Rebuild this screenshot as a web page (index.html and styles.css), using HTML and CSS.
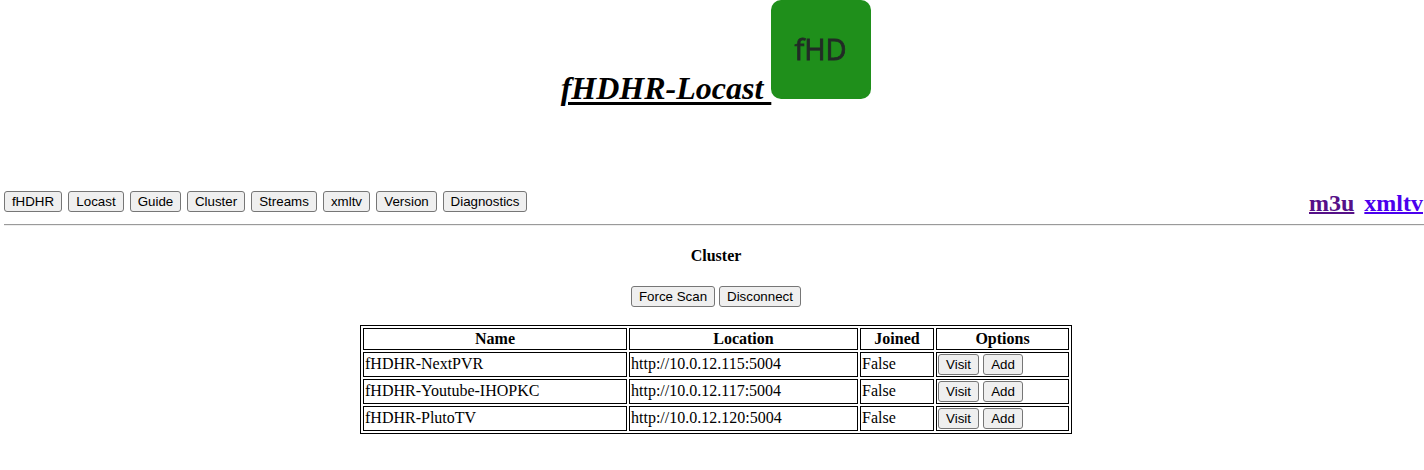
FILE: index.html
```html
<!DOCTYPE html>
<html lang="en">
<head>
<meta charset="utf-8">
<title>fHDHR-Locast</title>
<link rel="stylesheet" href="styles.css">
</head>
<body>
<header class="banner">
  <h1 class="title"><span class="name">fHDHR-Locast&nbsp;</span><svg class="logo" viewBox="0 0 100 99"><rect width="100" height="99" rx="10" fill="#1f8f1b"/><text x="49.500" y="60" text-anchor="middle" textLength="52" class="logo-text">fHD</text></svg></h1>
</header>
<nav class="nav">
  <div class="buttons">
    <button class="w58">fHDHR</button><button class="w56">Locast</button><button class="w51">Guide</button><button class="w58">Cluster</button><button class="w66">Streams</button><button class="w47">xmltv</button><button class="w61">Version</button><button class="w84">Diagnostics</button>
  </div>
  <div class="links"><a class="visited" href="#">m3u</a><a class="active" href="#">xmltv</a></div>
</nav>
<hr class="rule">
<main class="main">
  <h4 class="heading">Cluster</h4>
  <div class="actions"><button class="w84">Force Scan</button><button class="w82">Disconnect</button></div>
  <table class="table">
    <colgroup><col class="c1"><col class="c2"><col class="c3"><col class="c4"></colgroup>
    <tr class="head"><th>Name</th><th>Location</th><th>Joined</th><th>Options</th></tr>
    <tr><td>fHDHR-NextPVR</td><td>http://10.0.12.115:5004</td><td>False</td><td><div class="options"><button class="w41">Visit</button><button class="w40">Add</button></div></td></tr>
    <tr><td>fHDHR-Youtube-IHOPKC</td><td>http://10.0.12.117:5004</td><td>False</td><td><div class="options"><button class="w41">Visit</button><button class="w40">Add</button></div></td></tr>
    <tr><td>fHDHR-PlutoTV</td><td>http://10.0.12.120:5004</td><td>False</td><td><div class="options"><button class="w41">Visit</button><button class="w40">Add</button></div></td></tr>
  </table>
</main>
</body>
</html>
```
FILE: styles.css
```css
* { box-sizing: border-box; }
body { margin: 0; background: #fff; color: #000; font: 16px "Liberation Serif", "Times New Roman", serif; height: 470px; overflow: hidden; }
.banner { height: 191px; padding-left: 8px; }
.title { margin: 0; display: flex; justify-content: center; font-size: 32px; line-height: 36px; font-style: italic; }
.name { padding-top: 70px; text-decoration: underline; text-decoration-thickness: 3px; text-underline-offset: 3px; text-decoration-skip-ink: auto; }
.logo { width: 100px; height: 99px; }
.logo-text { font: 400 29px "Open Sans", sans-serif; fill: #222b26; stroke: #222b26; stroke-width: 0.8px; filter: blur(0.7px); }
.nav { display: flex; justify-content: space-between; height: 33px; padding: 0 1px 0 4px; }
.buttons { display: flex; gap: 6px; }
button { height: 21px; padding: 0; border: 1px solid #767676; border-radius: 3px; background: #efefef; color: #000; font: 13.333px/15px "Liberation Sans", Arial, sans-serif; white-space: nowrap; }
.w40 { width: 40px; } .w41 { width: 41px; } .w47 { width: 47px; } .w51 { width: 51px; }
.w56 { width: 56px; } .w58 { width: 58px; } .w61 { width: 61px; } .w66 { width: 66px; }
.w82 { width: 82px; } .w84 { width: 84px; }
.links { display: flex; gap: 10px; font-size: 24px; font-weight: bold; line-height: 25px; }
.links a { text-decoration-thickness: 2px; }
.visited { color: #551088; }
.active { color: #4b00ee; }
.rule { width: auto; margin: 0 0 0 4px; border: 0; border-top: 1px solid #9a9a9a; border-bottom: 1px solid #eee; height: 2px; }
.main { padding-left: 8px; display: flex; flex-direction: column; align-items: center; }
.heading { margin: 21px 0; line-height: 18px; font-size: 16px; }
.actions { display: flex; gap: 4px; height: 39px; }
.table { width: 712px; table-layout: fixed; border: 1px solid #000; border-collapse: separate; border-spacing: 2px; }
.c1 { width: 264px; } .c2 { width: 229px; } .c3 { width: 74px; } .c4 { width: 133px; }
th, td { border: 1px solid #000; padding: 1px; height: 25px; line-height: 18px; }
td:not(:last-child) { padding-bottom: 3px; }
.head th { height: 22px; }
.options { display: flex; gap: 4px; }
```
